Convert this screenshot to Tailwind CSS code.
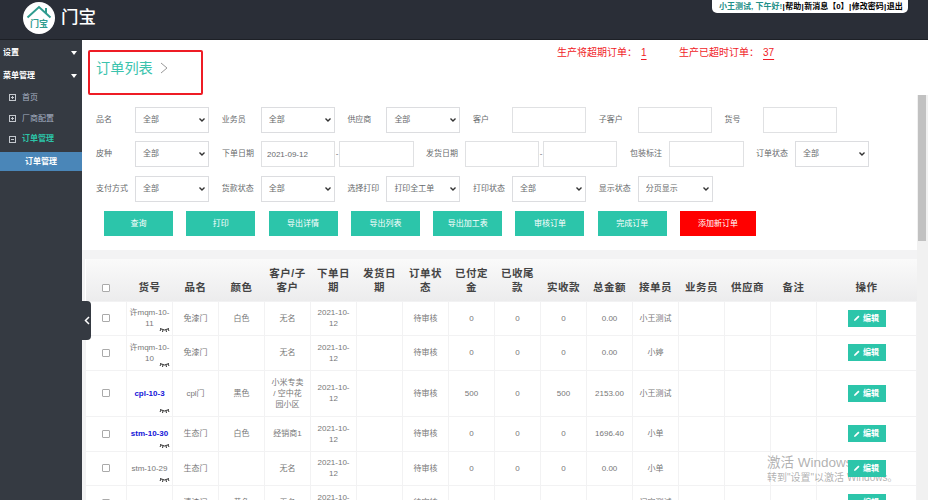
<!DOCTYPE html>
<html lang="zh">
<head>
    <meta charset="UTF-8">
    <title>门宝 订单列表</title>
    <script src="https://cdn.jsdelivr.net/npm/@tailwindcss/browser@4"></script>
</head>
<body class="w-[928px] h-[500px] overflow-hidden relative bg-white text-[8px] text-[#676a6c] font-['Liberation_Sans','Noto_Sans_CJK_SC',sans-serif]">

    <!-- 顶栏 -->
    <header class="h-[40px] bg-[#2a2e37] border-b border-[#1d2026] flex relative">
        <div class="flex items-center pl-[23px] pb-[4px]">
            <svg width="32" height="32" viewBox="0 0 32 32">
                <circle cx="16" cy="16" r="16" fill="#fff"/>
                <path d="M4.5 15.5 L16 5 L27.5 15.5" fill="none" stroke="#2f9c8f" stroke-width="2"/>
                <path d="M23 6 L23 11" stroke="#2f9c8f" stroke-width="2"/>
                <text x="16" y="25" text-anchor="middle" font-size="9" font-weight="700" fill="#2f9c8f">门宝</text>
            </svg>
            <span class="ml-[6px] text-[17.5px] leading-none font-medium text-white">门宝</span>
        </div>
        <div class="absolute left-[712px] top-0 w-[196px] h-[13px] bg-white rounded-b-[5px] flex items-center pl-[7px] font-bold text-black whitespace-nowrap">
            <span class="text-[#1f8f88]">小王测试, 下午好!</span><span class="mx-[0.4px]">|</span><span>帮助</span><span class="mx-[0.4px]">|</span><span>新消息【0】</span><span class="mx-[0.4px]">|</span><span>修改密码</span><span class="mx-[0.4px]">|</span><span>退出</span>
        </div>
    </header>

    <div class="flex h-[460px]">
        <!-- 左侧菜单 -->
        <aside class="w-[82px] shrink-0 bg-[#353a42] text-[#a7b1c2]">
            <div class="h-[23px] mt-[1px] flex items-center justify-between pl-[3px] pr-[5px] font-bold text-white"><span>设置</span>
                <svg width="6" height="4" viewBox="0 0 6 4"><path d="M0 0H6L3 4Z" fill="#fff"/></svg></div>
            <div class="h-[23px] flex items-center justify-between pl-[3px] pr-[5px] font-bold text-white"><span>菜单管理</span>
                <svg width="6" height="4" viewBox="0 0 6 4"><path d="M0 0H6L3 4Z" fill="#fff"/></svg></div>
            <div class="h-[21px] flex items-center pl-[9px] gap-[6px]">
                <svg width="7" height="7" viewBox="0 0 7 7" fill="none" stroke="#c4c8ce"><rect x=".5" y=".5" width="6" height="6"/><path d="M2 3.5H5M3.5 2V5"/></svg><span>首页</span></div>
            <div class="h-[21px] flex items-center pl-[9px] gap-[6px]">
                <svg width="7" height="7" viewBox="0 0 7 7" fill="none" stroke="#c4c8ce"><rect x=".5" y=".5" width="6" height="6"/><path d="M2 3.5H5M3.5 2V5"/></svg><span>厂商配置</span></div>
            <div class="h-[20px] flex items-center pl-[9px] gap-[6px] text-[#2cc4a8] font-bold">
                <svg width="7" height="7" viewBox="0 0 7 7" fill="none" stroke="#c4c8ce"><rect x=".5" y=".5" width="6" height="6"/><path d="M2 3.5H5"/></svg><span>订单管理</span></div>
            <div class="h-[19px] mt-[3px] bg-[#4a86b8] flex items-center justify-center font-bold text-white">订单管理</div>
        </aside>

        <!-- 主体 -->
        <main class="flex-1 min-w-0 flex flex-col">
            <div class="h-[55px] relative shrink-0">
                <div class="absolute left-[6px] top-[10px] w-[115px] h-[45px] border-2 border-[#ee1c25] rounded-[2px] pl-[6px] pt-[6px] flex items-start gap-[7px]">
                    <span class="text-[14.2px] leading-[20px] text-[#3cc3ad]">订单列表</span>
                    <svg class="mt-[4px]" width="8" height="12" viewBox="0 0 8 12" fill="none" stroke="#999"><path d="M1 1L7 6L1 11"/></svg>
                </div>
                <div class="absolute left-[475px] top-[6px] flex text-[10px] leading-[14px] text-[#f01c28] whitespace-nowrap">
                    <span>生产将超期订单：</span><span class="underline underline-offset-3 ml-[4px] w-[34px]">1</span>
                    <span class="ml-[4px]">生产已超时订单：</span><span class="underline underline-offset-3 ml-[4px]">37</span>
                </div>
            </div>

            <div class="flex-1 min-h-0 flex">
                <div class="flex-1 min-w-0 bg-[#f3f3f4] overflow-hidden">
                    <!-- 查询条件 -->
                    <div class="bg-white h-[155px] pl-[14px] pt-[12px] [&_select]:appearance-none [&_select]:bg-no-repeat [&_select]:bg-[position:right_3px_center] [&_select]:bg-[url('data:image/svg+xml,%3Csvg%20xmlns=%22http://www.w3.org/2000/svg%22%20width=%226%22%20height=%224%22%3E%3Cpath%20d=%22M.5%20.5L3%203L5.5%20.5%22%20fill=%22none%22%20stroke=%22%23333%22%20stroke-width=%221.4%22/%3E%3C/svg%3E')]">
                        <div class="flex items-center h-[26px]">
                            <div class="w-[125.7px] flex items-center"><label class="w-[39px]">品名</label><select class="w-[74px] h-[26px] border border-[#dcdde0] bg-white pl-[7px] text-[8px]"><option>全部</option></select></div>
                            <div class="w-[125.7px] flex items-center"><label class="w-[39px]">业务员</label><select class="w-[74px] h-[26px] border border-[#dcdde0] bg-white pl-[7px] text-[8px]"><option>全部</option></select></div>
                            <div class="w-[125.7px] flex items-center"><label class="w-[39px]">供应商</label><select class="w-[74px] h-[26px] border border-[#dcdde0] bg-white pl-[7px] text-[8px]"><option>全部</option></select></div>
                            <div class="w-[125.7px] flex items-center"><label class="w-[39px]">客户</label><input class="w-[74px] h-[26px] border border-[#e0e1e3]"></div>
                            <div class="w-[125.7px] flex items-center"><label class="w-[39px]">子客户</label><input class="w-[74px] h-[26px] border border-[#e0e1e3]"></div>
                            <div class="flex items-center"><label class="w-[39px]">货号</label><input class="w-[74px] h-[26px] border border-[#e0e1e3]"></div>
                        </div>
                        <div class="flex items-center h-[26px] mt-[8px]">
                            <div class="w-[126px] flex items-center"><label class="w-[39px]">皮种</label><select class="w-[74px] h-[26px] border border-[#dcdde0] bg-white pl-[7px] text-[8px]"><option>全部</option></select></div>
                            <div class="w-[204px] flex items-center"><label class="w-[39px]">下单日期</label><input value="2021-09-12" class="w-[74px] h-[26px] border border-[#e0e1e3] pl-[5px]"><span class="w-[4px] text-center">-</span><input class="w-[75px] h-[26px] border border-[#e0e1e3]"></div>
                            <div class="w-[204px] flex items-center"><label class="w-[39px]">发货日期</label><input class="w-[74px] h-[26px] border border-[#e0e1e3]"><span class="w-[4px] text-center">-</span><input class="w-[74px] h-[26px] border border-[#e0e1e3]"></div>
                            <div class="w-[126px] flex items-center"><label class="w-[39px]">包装标注</label><input class="w-[75px] h-[26px] border border-[#e0e1e3]"></div>
                            <div class="flex items-center"><label class="w-[39px]">订单状态</label><select class="w-[74px] h-[26px] border border-[#dcdde0] bg-white pl-[7px] text-[8px]"><option>全部</option></select></div>
                        </div>
                        <div class="flex items-center h-[26px] mt-[9px]">
                            <div class="w-[125.7px] flex items-center"><label class="w-[39px]">支付方式</label><select class="w-[74px] h-[26px] border border-[#dcdde0] bg-white pl-[7px] text-[8px]"><option>全部</option></select></div>
                            <div class="w-[125.7px] flex items-center"><label class="w-[39px]">货款状态</label><select class="w-[74px] h-[26px] border border-[#dcdde0] bg-white pl-[7px] text-[8px]"><option>全部</option></select></div>
                            <div class="w-[125.7px] flex items-center"><label class="w-[39px]">选择打印</label><select class="w-[74px] h-[26px] border border-[#dcdde0] bg-white pl-[7px] text-[8px]"><option>打印全工单</option></select></div>
                            <div class="w-[125.7px] flex items-center"><label class="w-[39px]">打印状态</label><select class="w-[74px] h-[26px] border border-[#dcdde0] bg-white pl-[7px] text-[8px]"><option>全部</option></select></div>
                            <div class="flex items-center"><label class="w-[39px]">显示状态</label><select class="w-[75px] h-[26px] border border-[#dcdde0] bg-white pl-[7px] text-[8px]"><option>分页显示</option></select></div>
                        </div>
                        <div class="flex mt-[9px] ml-[8px] gap-[13.3px] text-white">
                            <button class="w-[69px] h-[25px] bg-[#2cc5aa]">查询</button>
                            <button class="w-[69px] h-[25px] bg-[#2cc5aa]">打印</button>
                            <button class="w-[69px] h-[25px] bg-[#2cc5aa]">导出详情</button>
                            <button class="w-[69px] h-[25px] bg-[#2cc5aa]">导出列表</button>
                            <button class="w-[69px] h-[25px] bg-[#2cc5aa]">导出加工表</button>
                            <button class="w-[69px] h-[25px] bg-[#2cc5aa]">审核订单</button>
                            <button class="w-[69px] h-[25px] bg-[#2cc5aa]">完成订单</button>
                            <button class="w-[76px] h-[25px] bg-[#ff0000]">添加新订单</button>
                        </div>
                    </div>

                    <!-- 订单表格 -->
                    <div class="mt-[9px] ml-[3px] bg-white">
                        <table class="table-fixed border-collapse w-[832px] text-center">
                            <colgroup>
                                <col class="w-[41px]"><col class="w-[46px]"><col class="w-[46px]"><col class="w-[46px]"><col class="w-[46px]"><col class="w-[46px]"><col class="w-[46px]"><col class="w-[46px]"><col class="w-[46px]"><col class="w-[46px]"><col class="w-[46px]"><col class="w-[46px]"><col class="w-[46px]"><col class="w-[46px]"><col class="w-[46px]"><col class="w-[46px]"><col>
                            </colgroup>
                            <thead>
                                <tr class="h-[42px] bg-gradient-to-b from-[#fafafa] to-[#ececed] text-[10.5px] tracking-[0.5px] leading-[14.5px] font-bold text-[#444]">
                                    <th class="align-bottom pb-[6px] px-[4px] font-bold"><input type="checkbox" class="w-[8px] h-[8px] appearance-none border border-[#aaa] rounded-[1px] bg-white align-middle"></th>
                                    <th class="align-bottom pb-[6px] px-[4px] font-bold">货号</th>
                                    <th class="align-bottom pb-[6px] px-[4px] font-bold">品名</th>
                                    <th class="align-bottom pb-[6px] px-[4px] font-bold">颜色</th>
                                    <th class="align-bottom pb-[6px] px-[4px] font-bold">客户/子客户</th>
                                    <th class="align-bottom pb-[6px] px-[4px] font-bold">下单日期</th>
                                    <th class="align-bottom pb-[6px] px-[4px] font-bold">发货日期</th>
                                    <th class="align-bottom pb-[6px] px-[4px] font-bold">订单状态</th>
                                    <th class="align-bottom pb-[6px] px-[4px] font-bold">已付定金</th>
                                    <th class="align-bottom pb-[6px] px-[4px] font-bold">已收尾款</th>
                                    <th class="align-bottom pb-[6px] px-[4px] font-bold">实收款</th>
                                    <th class="align-bottom pb-[6px] px-[4px] font-bold">总金额</th>
                                    <th class="align-bottom pb-[6px] px-[4px] font-bold">接单员</th>
                                    <th class="align-bottom pb-[6px] px-[4px] font-bold">业务员</th>
                                    <th class="align-bottom pb-[6px] px-[4px] font-bold">供应商</th>
                                    <th class="align-bottom pb-[6px] px-[4px] font-bold">备注</th>
                                    <th class="align-bottom pb-[6px] px-[4px] font-bold">操作</th>
                                </tr>
                            </thead>
                            <tbody id="rows" class="leading-[11px] text-[#777]"></tbody>
                        </table>
                    </div>
                </div>
                <!-- 滚动条 -->
                <div class="w-[11px] shrink-0 bg-[#f1f1f1] pl-[1px] pr-[2px]"><div class="h-[146px] bg-[#c1c1c1]"></div></div>
            </div>
        </main>
    </div>

    <!-- 折叠菜单按钮 -->
    <div class="absolute left-[82px] top-[301px] w-[9px] h-[39px] bg-[#353a42] rounded-r-[4px] flex items-center justify-center">
        <svg width="6" height="9" viewBox="0 0 6 9" fill="none" stroke="#fff" stroke-width="1.5"><path d="M5 1L1.5 4.5L5 8"/></svg>
    </div>

    <!-- 系统水印 -->
    <div class="absolute left-[767px] top-[455px] text-[#8f8f8f]/70 whitespace-nowrap">
        <div class="text-[13.5px] leading-[16px]">激活 Windows</div>
        <div class="text-[10px] leading-[14px]">转到"设置"以激活 Windows。</div>
    </div>

    <script>
        const rows = [
            { h: 34, no: "许mqm-10-11", name: "免漆门", color: "白色", cust: "无名", st: ["0", "0", "0", "0.00"], by: "小王测试" },
            { h: 35, no: "许mqm-10-10", name: "免漆门", color: "", cust: "无名", st: ["0", "0", "0", "0.00"], by: "小婷" },
            { h: 46, no: "cpl-10-3", blue: true, name: "cpl门", color: "黑色", cust: "小米专卖 / 空中花园小区", st: ["500", "0", "500", "2153.00"], by: "小王测试" },
            { h: 35, no: "stm-10-30", blue: true, name: "生态门", color: "白色", cust: "经销商1", st: ["0", "0", "0", "1696.40"], by: "小单" },
            { h: 34, no: "stm-10-29", name: "生态门", color: "", cust: "无名", st: ["0", "0", "0", "0.00"], by: "小单" },
            { h: 35, no: "qqm-10-8", name: "清漆门", color: "黄色", cust: "无名", st: ["0", "0", "0", "0.00"], by: "门宝测试" }
        ];
        const td = "border border-[#f2f2f3] px-[5px]";
        const tdNo = "border border-[#f2f2f3] px-[1px]";
        document.getElementById("rows").innerHTML = rows.map(r => `
            <tr style="height:${r.h}px">
                <td class="${td}"><input type="checkbox" class="w-[8px] h-[8px] appearance-none border border-[#aaa] rounded-[1px] align-middle"></td>
                <td class="${tdNo} relative ${r.blue ? "text-[#1414d8] font-bold" : ""}">${r.no}
                    <svg class="absolute right-[2px] bottom-[3px]" width="11" height="5" viewBox="0 0 11 5" fill="none" stroke="#333" stroke-width="1"><path d="M1 1.5Q5.5 4.5 10 1.5M2 2L1 4M4 3L3.5 5M7 3L7.5 5M9 2L10 4"/></svg>
                </td>
                <td class="${td}">${r.name}</td>
                <td class="${td}">${r.color}</td>
                <td class="${td}">${r.cust}</td>
                <td class="${td}">2021-10-12</td>
                <td class="${td}"></td>
                <td class="${td}">待审核</td>
                ${r.st.map(v => `<td class="${td}">${v}</td>`).join("")}
                <td class="${td}">${r.by}</td>
                <td class="${td}"></td>
                <td class="${td}"></td>
                <td class="${td}"></td>
                <td class="${td}">
                    <button class="relative z-10 w-[38px] h-[17px] bg-[#2cc5aa] text-white font-bold inline-flex items-center justify-center gap-[3px]">
                        <svg width="6" height="6" viewBox="0 0 6 6"><path d="M0 6L.5 4.3L4.3 .5L5.5 1.7L1.7 5.5Z" fill="#fff"/></svg>编辑
                    </button>
                </td>
            </tr>`).join("");
    </script>
</body>
</html>
